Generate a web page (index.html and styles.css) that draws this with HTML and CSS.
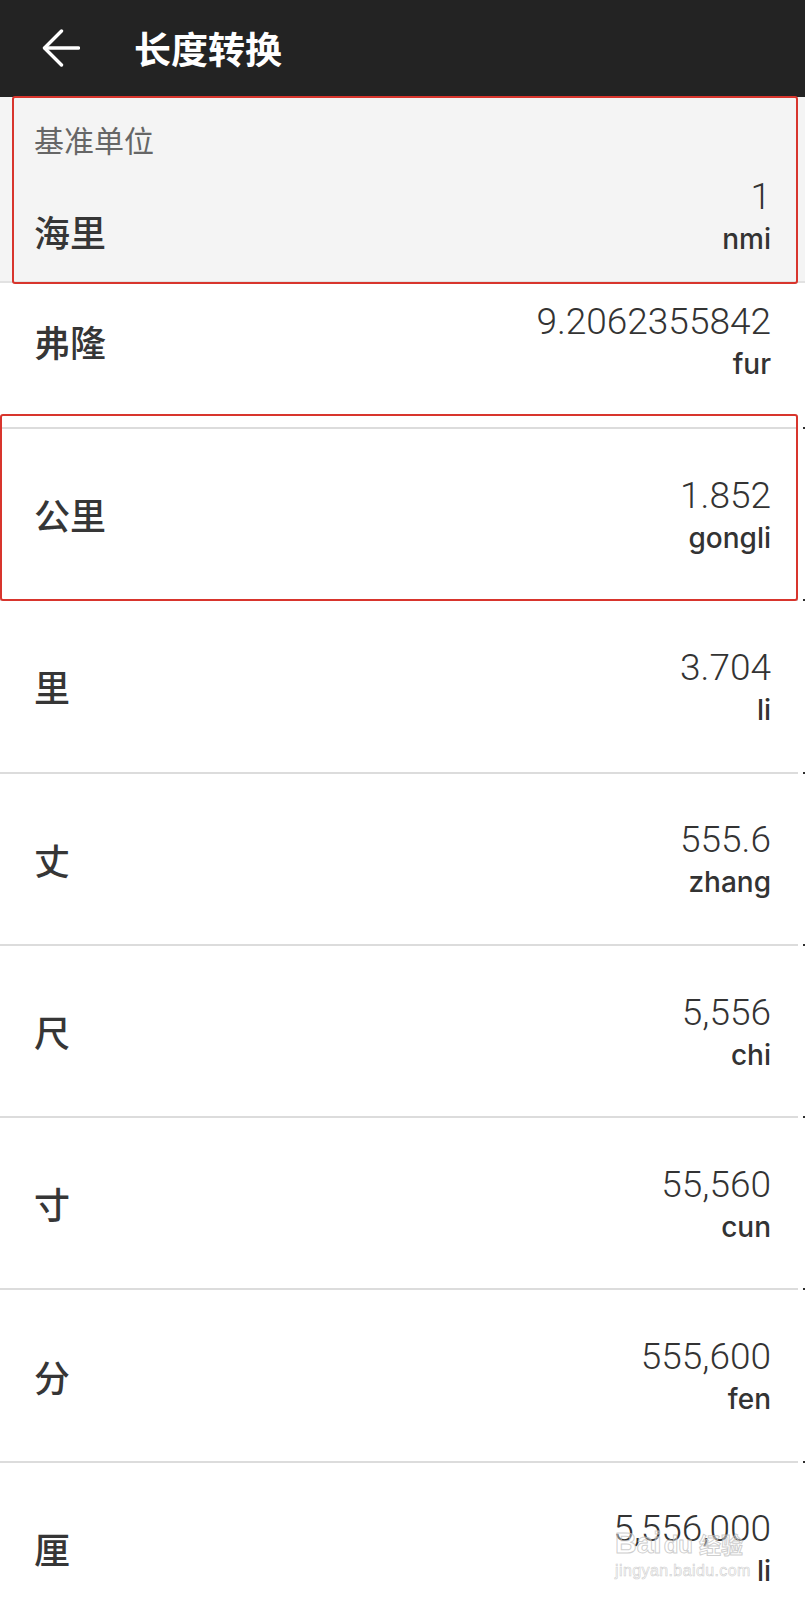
FILE: index.html
```html
<!DOCTYPE html>
<html lang="zh-CN">
<head>
<meta charset="utf-8">
<title>长度转换</title>
<link rel="stylesheet" href="styles.css">
</head>
<body>
<div class="screen">
  <header class="appbar">
    <svg class="back" viewBox="0 0 38 38" width="38" height="38" aria-hidden="true">
      <path d="M36.5 19H3" fill="none" stroke="#fff" stroke-width="3.4" stroke-linecap="round"/>
      <path d="M19.5 2L2.5 19l17 17" fill="none" stroke="#fff" stroke-width="3.4" stroke-linecap="round" stroke-linejoin="round"/>
    </svg>
    <h1 class="title">长度转换</h1>
  </header>

  <section class="base">
    <div class="base-label">基准单位</div>
    <div class="base-row">
      <div class="name base-name">海里</div>
      <div class="value">
        <div class="num">1</div>
        <div class="unit">nmi</div>
      </div>
    </div>
  </section>

  <ul class="list">
    <li class="row row-partial">
      <div class="name">弗隆</div>
      <div class="value"><div class="num">9.2062355842</div><div class="unit">fur</div></div>
    </li>
    <li class="row">
      <div class="name">公里</div>
      <div class="value"><div class="num">1.852</div><div class="unit">gongli</div></div>
    </li>
    <li class="row">
      <div class="name">里</div>
      <div class="value"><div class="num">3.704</div><div class="unit">li</div></div>
    </li>
    <li class="row">
      <div class="name">丈</div>
      <div class="value"><div class="num">555.6</div><div class="unit">zhang</div></div>
    </li>
    <li class="row">
      <div class="name">尺</div>
      <div class="value"><div class="num">5,556</div><div class="unit">chi</div></div>
    </li>
    <li class="row">
      <div class="name">寸</div>
      <div class="value"><div class="num">55,560</div><div class="unit">cun</div></div>
    </li>
    <li class="row">
      <div class="name">分</div>
      <div class="value"><div class="num">555,600</div><div class="unit">fen</div></div>
    </li>
    <li class="row">
      <div class="name">厘</div>
      <div class="value"><div class="num">5,556,000</div><div class="unit">li</div></div>
    </li>
  </ul>

  <div class="mark mark-base"></div>
  <div class="mark mark-gongli"></div>

  <div class="watermark">
    <div class="wm-logo">Bai<span class="wm-du">du</span><span class="wm-cn">经验</span></div>
    <div class="wm-url">jingyan.baidu.com</div>
  </div>
</div>
</body>
</html>
```

FILE: styles.css
```css
* {
  box-sizing: border-box;
}

html, body {
  margin: 0;
  padding: 0;
  background: #ffffff;
}

.screen {
  position: relative;
  width: 805px;
  height: 1600px;
  overflow: hidden;
  background: #ffffff;
  font-family: Roboto, "Noto Sans CJK SC", sans-serif;
  color: #333333;
}

/* ---------- app bar ---------- */
.appbar {
  height: 97px;
  background: #232323;
  display: flex;
  align-items: center;
  padding-left: 42px;
}

.back {
  display: block;
  flex: none;
  margin-top: -2px;
}

.title {
  margin: 0 0 0 54px;
  font-family: "Noto Sans CJK SC", sans-serif;
  font-weight: 700;
  font-size: 37px;
  line-height: 37px;
  color: #ffffff;
}

/* ---------- base unit ---------- */
.base {
  height: 186px;
  background: #f4f4f4;
  border-bottom: 2px solid #e2e2e2;
  padding: 27px 34px 0 34px;
  display: flex;
  flex-direction: column;
}

.base-label {
  font-family: "Noto Sans CJK SC", sans-serif;
  font-size: 30px;
  line-height: 30px;
  color: #666666;
}

.base-row {
  margin-top: 24px;
  display: flex;
  justify-content: space-between;
  align-items: flex-end;
}

.base-name {
  margin-bottom: 4px;
}

/* ---------- list ---------- */
.list {
  list-style: none;
  margin: 0;
  padding: 0;
}

.row {
  height: 172.3px;
  padding: 0 34px;
  display: flex;
  justify-content: space-between;
  align-items: center;
  border-bottom: 2px solid #dcdcdc;
  border-image: linear-gradient(to right, #dcdcdc 797px, #ffffff 797px, #ffffff 802px, #2e2e2e 802px) 1;
}

.row-partial {
  height: 146px;
  padding-bottom: 29px;
}

.name {
  font-family: "Noto Sans CJK SC", sans-serif;
  font-weight: 500;
  font-size: 36px;
  line-height: 36px;
  color: #363636;
}

.value {
  display: flex;
  flex-direction: column;
  align-items: flex-end;
}

.num {
  font-family: Roboto, "Liberation Sans", sans-serif;
  font-weight: 300;
  font-size: 37px;
  line-height: 37px;
  color: #333333;
}

.unit {
  margin-top: 10px;
  font-family: Inter, Roboto, sans-serif;
  font-weight: 500;
  font-size: 28px;
  line-height: 28px;
  color: #333333;
}

/* ---------- annotation boxes (overlay) ---------- */
.mark {
  position: absolute;
  border: 2px solid #d8352d;
  border-radius: 3px;
  pointer-events: none;
}

.mark-base {
  left: 12px;
  top: 96px;
  width: 786px;
  height: 188px;
}

.mark-gongli {
  left: 0;
  top: 414px;
  width: 798px;
  height: 187px;
}

/* ---------- watermark (overlay) ---------- */
.watermark {
  position: absolute;
  left: 615px;
  top: 1526px;
  width: 150px;
  color: rgba(255, 255, 255, 0.35);
  -webkit-text-stroke: 1px rgba(190, 190, 190, 0.75);
  pointer-events: none;
}

.wm-logo {
  font-family: "Liberation Sans", sans-serif;
  font-weight: 700;
  font-size: 30px;
  line-height: 34px;
  white-space: nowrap;
}

.wm-du {
  font-size: 24px;
  margin-left: 2px;
}

.wm-cn {
  font-family: "Noto Sans CJK SC", sans-serif;
  font-size: 22px;
  margin-left: 6px;
}

.wm-url {
  font-family: "Liberation Sans", sans-serif;
  font-size: 16px;
  line-height: 18px;
  letter-spacing: 0.4px;
  -webkit-text-stroke: 0.6px rgba(190, 190, 190, 0.75);
}
```
